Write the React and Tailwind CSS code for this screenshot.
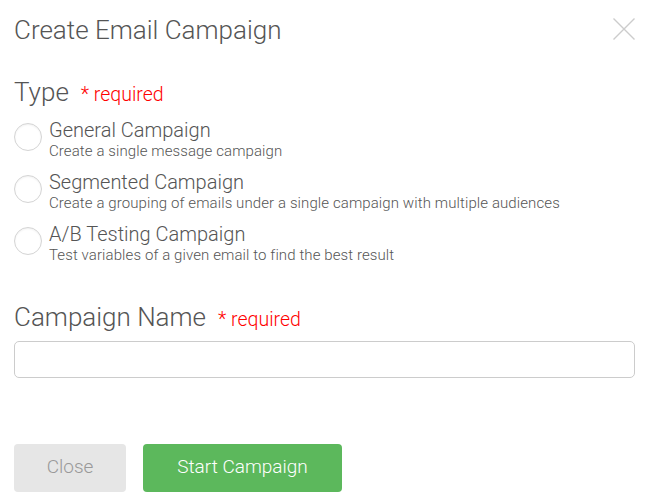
import React, { useState } from "react";

const types = [
  { id: "general", title: "General Campaign", desc: "Create a single message campaign" },
  { id: "segmented", title: "Segmented Campaign", desc: "Create a grouping of emails under a single campaign with multiple audiences" },
  { id: "ab", title: "A/B Testing Campaign", desc: "Test variables of a given email to find the best result" },
];

const App = () => {
  const [type, setType] = useState("");
  const [name, setName] = useState("");

  return (
    <div className="w-[648px] h-[503px] bg-white px-[14px] font-['Roboto',sans-serif] font-light text-[#555]">
      {/* Header */}
      <div className="flex items-start justify-between pt-[13px]">
        <h1 className="text-[26px] leading-[34px] text-[#555] font-light">Create Email Campaign</h1>
        <button className="mt-[5px] mr-[-1px] text-[#ccc]">
          <svg width="22" height="22" viewBox="0 0 22 22" stroke="currentColor" strokeWidth="1.4" fill="none">
            <path d="M0.5 0.5 L21.5 21.5 M21.5 0.5 L0.5 21.5" />
          </svg>
        </button>
      </div>

      {/* Type */}
      <div className="mt-[28px] flex items-baseline gap-[12px]">
        <span className="text-[26px] leading-[34px]">Type</span>
        <span className="text-[19.5px] text-[#f00]">* required</span>
      </div>
      <div className="mt-[9px] flex flex-col gap-[10px]">
        {types.map((t) => (
          <label key={t.id} className="flex items-start gap-[7px] cursor-pointer">
            <input
              type="radio"
              name="type"
              checked={type === t.id}
              onChange={() => setType(t.id)}
              className="sr-only"
            />
            <span className="mt-[5px] w-[28px] h-[28px] rounded-full border border-[#d4d4d4] shadow-[inset_0_1px_2px_rgba(0,0,0,0.06)] shrink-0" />
            <span className="flex flex-col">
              <span className="text-[20px] leading-[24px] text-[#555]">{t.title}</span>
              <span className="text-[15px] leading-[18px] tracking-[0.1px] text-[#555]">{t.desc}</span>
            </span>
          </label>
        ))}
      </div>

      {/* Campaign name */}
      <div className="mt-[36px] flex items-baseline gap-[12px]">
        <span className="text-[26px] leading-[34px]">Campaign Name</span>
        <span className="text-[19.5px] text-[#f00]">* required</span>
      </div>
      <input
        type="text"
        value={name}
        onChange={(e) => setName(e.target.value)}
        className="mt-[6px] w-[621px] h-[37px] border border-[#ccc] rounded-[5px] px-3 text-[16px] outline-none"
      />

      {/* Actions */}
      <div className="mt-[66px] flex gap-[17px]">
        <button className="w-[112px] h-[48px] bg-[#e6e6e6] rounded-[4px] text-[19px] text-[#999] font-light">
          Close
        </button>
        <button className="w-[199px] h-[48px] bg-[#5cb85c] rounded-[4px] text-[19px] text-white font-light">
          Start Campaign
        </button>
      </div>
    </div>
  );
};

export default App;
